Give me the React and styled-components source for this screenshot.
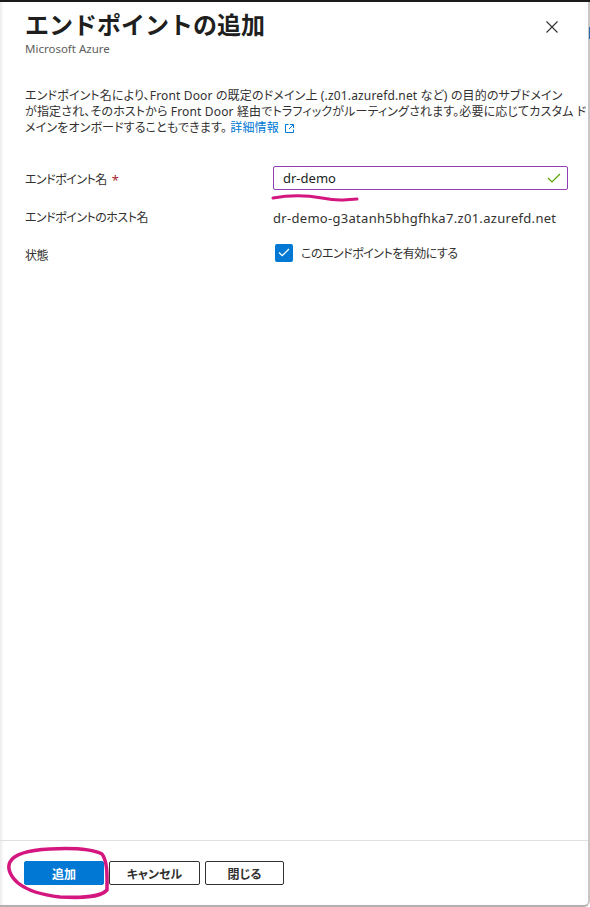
import React from "react";
import styled, { createGlobalStyle } from "styled-components";

const GlobalStyle = createGlobalStyle`
  html, body {
    margin: 0;
    padding: 0;
    background: #ffffff;
  }
  body {
    font-family: "Noto Sans", "Noto Sans CJK JP", sans-serif;
    font-feature-settings: "palt";
    color: #323130;
  }
`;

const Frame = styled.div`
  position: relative;
  width: 590px;
  height: 907px;
  box-sizing: border-box;
  border-top: 2px solid #1b1b1b;
  display: flex;
  overflow: hidden;
`;

const Panel = styled.div`
  flex: 1;
  min-width: 0;
  display: flex;
  flex-direction: column;
  box-sizing: border-box;
  border-right: 2px solid #c8c6c4;
  border-bottom: 2px solid #b3b0ad;
  border-bottom-right-radius: 6px;
  box-shadow: inset 3px 0 3px -1px #ececec;
  position: relative;
  &::after {
    content: "";
    position: absolute;
    right: -2px;
    top: 25px;
    width: 1px;
    height: 12px;
    background: #2b6cb0;
  }
`;

const Header = styled.header`
  display: flex;
  align-items: flex-start;
  justify-content: space-between;
  padding: 6px 29px 0 25px;
`;

const TitleBlock = styled.div`
  display: flex;
  flex-direction: column;
`;

const Title = styled.h1`
  margin: 0;
  font-family: "Noto Sans CJK JP", sans-serif;
  font-feature-settings: normal;
  font-size: 24px;
  font-weight: 700;
  line-height: 32px;
  color: #201f1e;
`;

const Subtitle = styled.div`
  margin-top: 1px;
  font-size: 11.5px;
  line-height: 16px;
  color: #605e5c;
`;

const CloseButton = styled.button`
  margin-top: 12px;
  width: 14px;
  height: 14px;
  padding: 0;
  border: none;
  background: none;
  display: flex;
  align-items: center;
  justify-content: center;
`;

const Body = styled.main`
  flex: 1;
  min-width: 0;
  display: flex;
  flex-direction: column;
  padding: 0 20px 0 25px;
`;

const Description = styled.p`
  margin: 31px 0 0;
  font-size: 12px;
  line-height: 16px;
  letter-spacing: 0.15px;
  color: #323130;
  white-space: nowrap;
`;

const Link = styled.a`
  color: #0078d4;
  text-decoration: none;
  display: inline-flex;
  align-items: center;
  gap: 5px;
`;

const Form = styled.div`
  margin-top: 30px;
  display: grid;
  grid-template-columns: 248px 1fr;
  row-gap: 14px;
  align-items: center;
`;

const Label = styled.div`
  font-size: 12px;
  letter-spacing: -0.5px;
  line-height: 20px;
  padding-top: 4px;
  color: #323130;
  display: flex;
  align-items: center;
  gap: 5px;
`;

const Required = styled.span`
  color: #a4262c;
  font-size: 13px;
`;

const Value = styled.div`
  font-size: 13px;
  line-height: ${(p) => (p.$text ? "20px" : "24px")};
  padding-top: ${(p) => (p.$text ? "4px" : "0")};
  color: #323130;
  letter-spacing: ${(p) => (p.$text ? "0.3px" : "normal")};
`;

const InputBox = styled.div`
  box-sizing: border-box;
  height: 24px;
  border: 1px solid #8f3fb3;
  border-radius: 2px;
  display: flex;
  align-items: center;
  justify-content: space-between;
  padding: 0 6px 0 9px;
`;

const InputText = styled.span`
  font-size: 13px;
  color: #201f1e;
`;

const CheckRow = styled.label`
  display: flex;
  align-items: center;
  gap: 8px;
  padding-left: 2px;
  font-size: 12px;
  letter-spacing: -0.5px;
  line-height: 24px;
`;

const CheckBox = styled.span`
  width: 18px;
  height: 18px;
  border-radius: 2px;
  background: #0078d4;
  display: flex;
  align-items: center;
  justify-content: center;
  margin-top: -3px;
`;

const Footer = styled.footer`
  border-top: 1px solid #e1dfdd;
  padding: 20px 24px 20px;
  display: flex;
  gap: 5px;
`;

const Button = styled.button`
  box-sizing: border-box;
  height: 24px;
  width: ${(p) => p.$w}px;
  border-radius: 2px;
  font-family: "Noto Sans CJK JP", sans-serif;
  font-feature-settings: "palt";
  font-size: 12px;
  font-weight: 700;
  padding: 0;
  border: 1px solid ${(p) => (p.$primary ? "#0078d4" : "#323130")};
  background: ${(p) => (p.$primary ? "#0078d4" : "#ffffff")};
  color: ${(p) => (p.$primary ? "#ffffff" : "#323130")};
`;

const Scribble = styled.svg`
  position: absolute;
  left: 0;
  top: 0;
  pointer-events: none;
`;

const ExternalIcon = () => (
  <svg width="11" height="11" viewBox="0 0 11 11" fill="none" stroke="#0078d4" strokeWidth="1">
    <path d="M4.5 1.5H1.5V9.5H9.5V6.5" />
    <path d="M6 1.5H9.5V5" />
    <path d="M9.5 1.5L5 6" />
  </svg>
);

export default function App() {
  return (
    <>
      <GlobalStyle />
      <Frame>
        <Panel>
          <Header>
            <TitleBlock>
              <Title>エンドポイントの追加</Title>
              <Subtitle>Microsoft Azure</Subtitle>
            </TitleBlock>
            <CloseButton aria-label="close">
              <svg width="12" height="12" viewBox="0 0 12 12" stroke="#323130" strokeWidth="1.1">
                <path d="M0.5 0.5L11.5 11.5M11.5 0.5L0.5 11.5" />
              </svg>
            </CloseButton>
          </Header>

          <Body>
            <Description>
              エンドポイント名により、Front Door の既定のドメイン上 (.z01.azurefd.net など) の目的のサブドメイン
              <br />
              が指定され、そのホストから Front Door 経由でトラフィックがルーティングされます。必要に応じてカスタム ド
              <br />
              メインをオンボードすることもできます。{" "}
              <Link href="#">
                詳細情報
                <ExternalIcon />
              </Link>
            </Description>

            <Form>
              <Label>
                エンドポイント名 <Required>*</Required>
              </Label>
              <Value>
                <InputBox>
                  <InputText>dr-demo</InputText>
                  <svg width="14" height="10" viewBox="0 0 14 10" fill="none" stroke="#57a300" strokeWidth="1.2">
                    <path d="M1 5L5 9L13 1" />
                  </svg>
                </InputBox>
              </Value>

              <Label>エンドポイントのホスト名</Label>
              <Value $text>dr-demo-g3atanh5bhgfhka7.z01.azurefd.net</Value>

              <Label>状態</Label>
              <Value>
                <CheckRow>
                  <CheckBox>
                    <svg width="12" height="9" viewBox="0 0 12 9" fill="none" stroke="#ffffff" strokeWidth="1.3">
                      <path d="M1 4.5L4.2 7.7L11 1" />
                    </svg>
                  </CheckBox>
                  このエンドポイントを有効にする
                </CheckRow>
              </Value>
            </Form>
          </Body>

          <Footer>
            <Button $primary $w={80}>追加</Button>
            <Button $w={91}>キャンセル</Button>
            <Button $w={79}>閉じる</Button>
          </Footer>
        </Panel>

        <Scribble width="590" height="907" viewBox="0 0 590 907">
          <path
            d="M273 196 C 290 193, 305 193, 322 196 S 345 198, 357 197"
            fill="none"
            stroke="#d4167f"
            strokeWidth="3"
            strokeLinecap="round"
          />
          <path
            d="M10 860 C 14 852, 30 848, 50 847 C 70 846, 90 846, 102 852 C 108 860, 107 876, 107 888 C 100 896, 80 896, 60 895 C 42 893, 28 889, 18 881 C 10 874, 7 866, 10 860"
            fill="none"
            stroke="#d4167f"
            strokeWidth="3.5"
            strokeLinecap="round"
            strokeLinejoin="round"
          />
        </Scribble>
      </Frame>
    </>
  );
}
